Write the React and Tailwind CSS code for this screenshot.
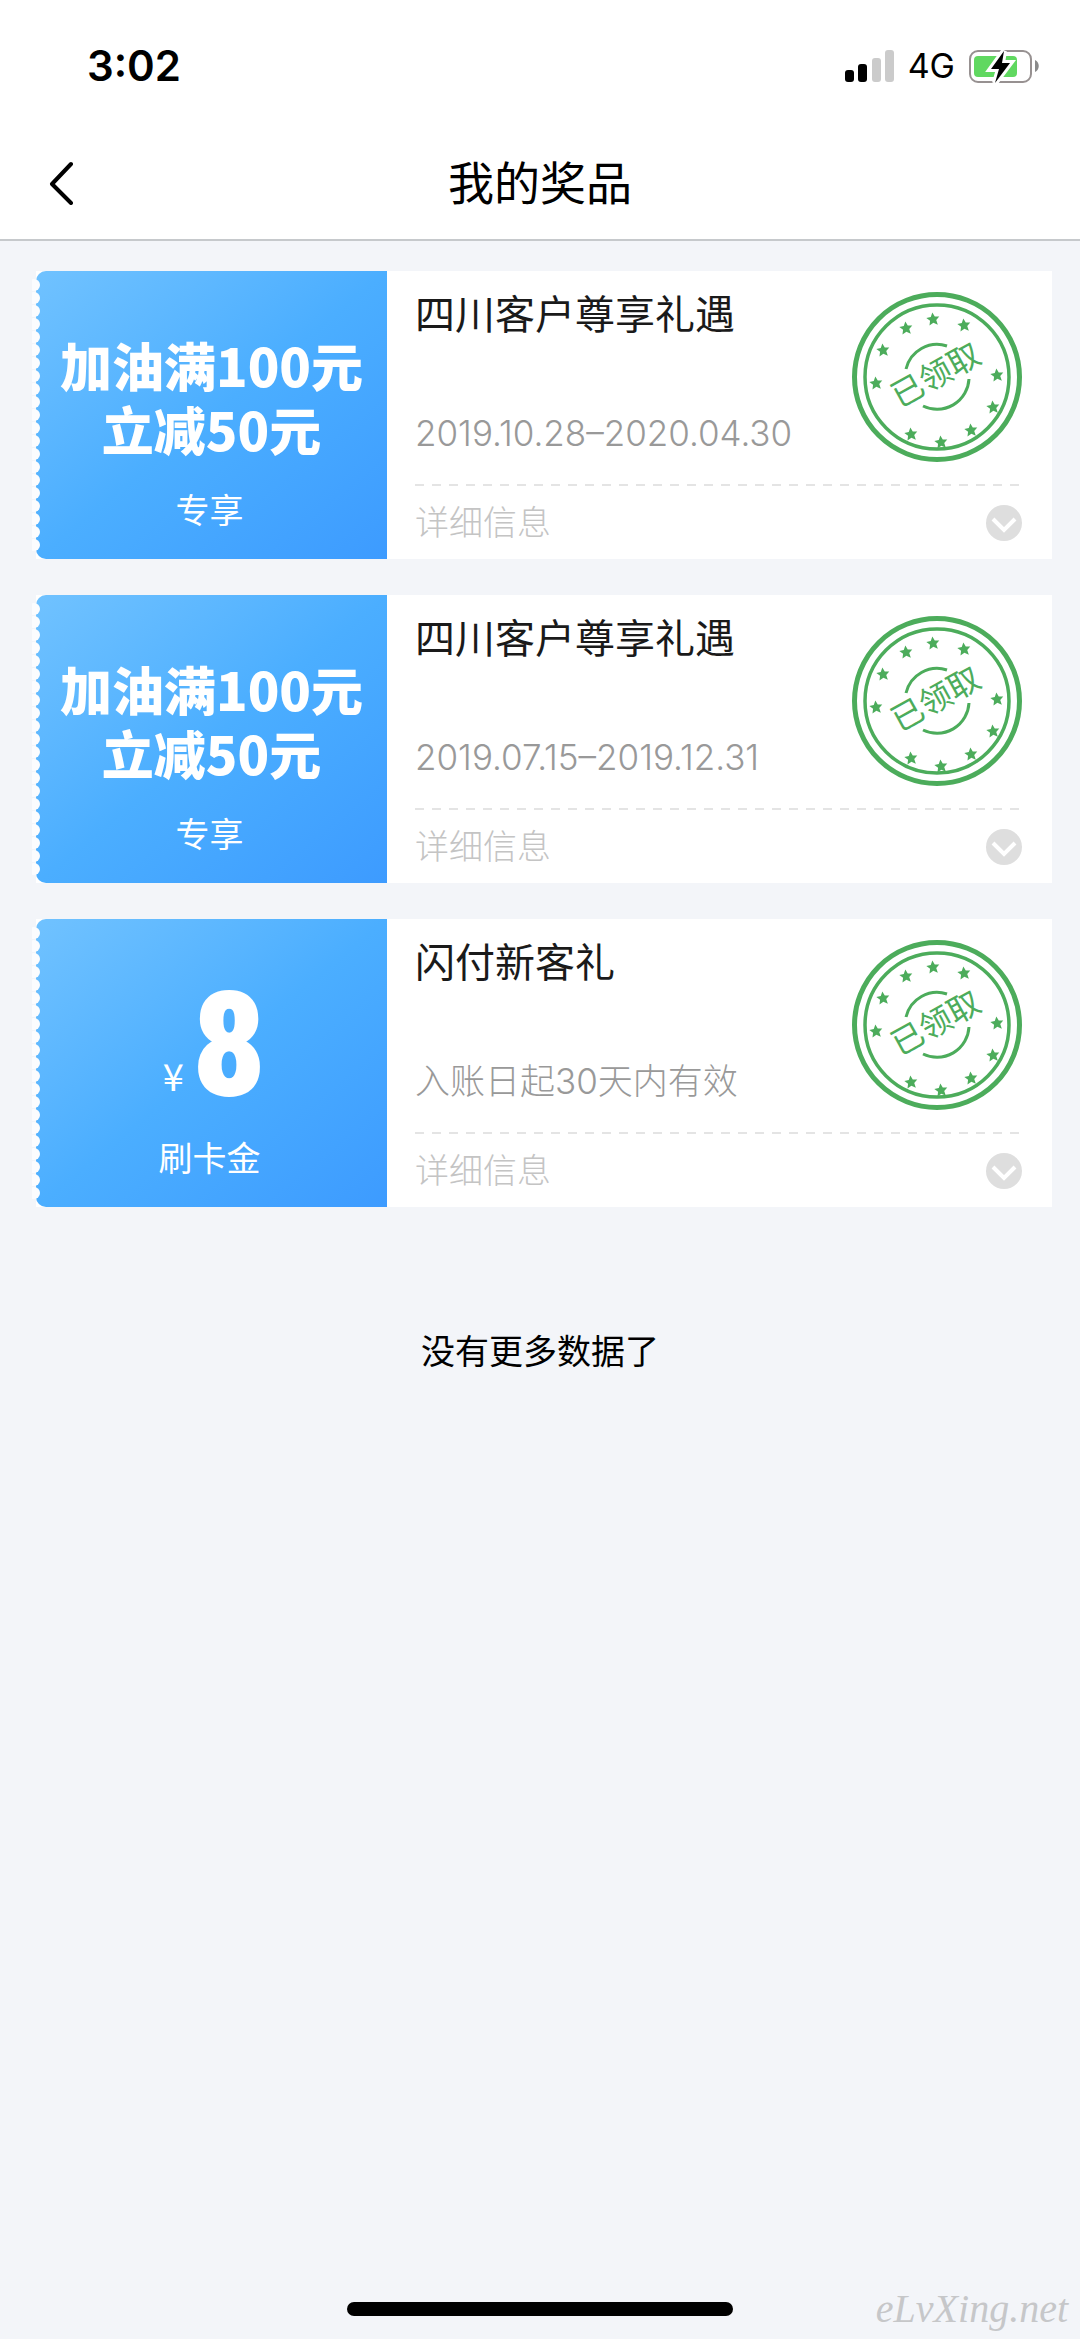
import React from 'react';

const REWARDS = [
  {
    id: 1,
    title: '四川客户尊享礼遇',
    period: '2019.10.28–2020.04.30',
    headline: ['加油满100元', '立减50元'],
    caption: '专享',
  },
  {
    id: 2,
    title: '四川客户尊享礼遇',
    period: '2019.07.15–2019.12.31',
    headline: ['加油满100元', '立减50元'],
    caption: '专享',
  },
  {
    id: 3,
    title: '闪付新客礼',
    period: '入账日起30天内有效',
    amount: '8',
    caption: '刷卡金',
  },
];

// star centres around the stamp ring
const STARS = [
  [81, 27], [112, 33], [54, 36], [31, 58], [24, 91], [145, 83],
  [141, 115], [119, 138], [89, 150], [59, 142],
];

const StatusBar = () => (
  <div className="flex h-[132px] items-center justify-between pl-[87px] pr-[41px]">
    <span className="font-['Inter'] text-[42px] font-semibold leading-none">3:02</span>
    <div className="flex items-center gap-[14px]">
      <svg width="49" height="32" viewBox="0 0 49 32" aria-hidden="true">
        <rect x="0" y="20" width="9" height="12" rx="3" fill="#000" />
        <rect x="13" y="14" width="9" height="18" rx="3" fill="#000" />
        <rect x="27" y="8" width="9" height="24" rx="3" fill="#cbcbcb" />
        <rect x="40" y="0" width="9" height="32" rx="3" fill="#cbcbcb" />
      </svg>
      <span className="font-['Inter'] text-[34px] leading-none">4G</span>
      <svg width="70" height="36" viewBox="0 0 70 36" aria-hidden="true">
        <rect x="1" y="3" width="61" height="31" rx="8" fill="#fff" stroke="#979191" strokeWidth="2" />
        <rect x="5" y="8" width="43" height="21" rx="4" fill="#60d860" />
        <path d="M66 12c5 2 5 10 0 12z" fill="#8a8a8a" />
        <path d="M35 3 22 21h8l-4 14 15-20h-8z" fill="#000" stroke="#fff" strokeWidth="6" paintOrder="stroke" />
      </svg>
    </div>
  </div>
);

const NavBar = () => (
  <header className="grid h-[107px] grid-cols-[1fr_auto_1fr] items-center px-[48px] pb-[8px]">
    <button type="button" aria-label="返回" className="justify-self-start">
      <svg width="26" height="46" viewBox="0 0 26 46" fill="none" stroke="#000" strokeWidth="4" strokeLinecap="round" strokeLinejoin="round">
        <path d="M23 5 4 25l19 19" />
      </svg>
    </button>
    <h1 className="pb-[4px] text-[46px] leading-none">我的奖品</h1>
  </header>
);

const Stamp = () => (
  <svg width="170" height="170" viewBox="0 0 170 170" className="shrink-0">
    <g fill="none" stroke="#4cac5b">
      <circle cx="85" cy="85" r="82.5" strokeWidth="5" />
      <circle cx="85" cy="85" r="72" strokeWidth="3.5" />
      <path d="M54 77A32 32 0 0 1 95 54M71 114A32 32 0 0 0 117 87" strokeWidth="3" />
    </g>
    {STARS.map(([x, y]) => (
      <path
        key={`${x}-${y}`}
        transform={`translate(${x} ${y}) rotate(-6)`}
        fill="#4cac5b"
        d="M0-6.5 2-2.2 6.5-1.8 3.1 1.4 4.2 6.2 0 3.8-4.2 6.2-3.1 1.4-6.5-1.8-2-2.2z"
      />
    ))}
    <text x="85" y="94" textAnchor="middle" fontSize="32" fill="#4cac5b" transform="rotate(-29 85 85)">
      已领取
    </text>
  </svg>
);

const TicketEdge = () => (
  <svg width="12" height="288" className="absolute -left-[4px] top-0" aria-hidden="true">
    {Array.from({ length: 21 }, (_, i) => (
      <circle key={i} cx="2" cy={14 + i * 13} r="6" fill="#fbfcfe" />
    ))}
  </svg>
);

const RewardFace = ({ reward }) => {
  if (reward.amount) {
    return (
      <div className="flex h-[214px] items-end gap-[8px] pb-[16px] pl-[6px]">
        <span className="text-[38px] leading-[84px]">¥</span>
        <span className="font-['Roboto_Condensed','Open_Sans_Condensed','Liberation_Sans'] text-[146px] font-black leading-[140px]">
          {reward.amount}
        </span>
      </div>
    );
  }
  return (
    <div className="h-[214px] pt-[62px] text-center">
      {reward.headline.map((line) => (
        <p key={line} className="text-[52px] font-black leading-[64px]">{line}</p>
      ))}
    </div>
  );
};

const RewardCard = ({ reward }) => (
  <li className="flex bg-white">
    <div className="relative flex h-[288px] w-[351px] shrink-0 flex-col items-center rounded-l-[10px] bg-linear-to-br from-[#70c2ff] via-[#4baeff] to-[#3d9bff] text-white">
      <TicketEdge />
      <RewardFace reward={reward} />
      <p className="pr-[4px] text-[34px] leading-[48px]">{reward.caption}</p>
    </div>
    <div className="flex flex-1 flex-col pl-[28px] pr-[30px]">
      <div className="flex h-[213px] justify-between">
        <div className="flex flex-col pt-[17px]">
          <h2 className="text-[40px] leading-[48px] text-[#1a1a1a]">{reward.title}</h2>
          <p className="mt-[73px] font-['Inter','Noto_Sans_CJK_SC',sans-serif] text-[35px] font-light leading-[48px] text-[#999]">{reward.period}</p>
        </div>
        <div className="pt-[21px]">
          <Stamp />
        </div>
      </div>
      <svg width="100%" height="3" aria-hidden="true">
        <line x1="0" y1="1" x2="100%" y2="1" stroke="#e4e4e4" strokeWidth="2" strokeDasharray="9 8" />
      </svg>
      <button type="button" className="flex flex-1 items-center justify-between text-[34px] font-light text-[#c4c4c4]">
        <span className="pb-[6px]">详细信息</span>
        <svg width="36" height="38" viewBox="0 0 36 38" aria-hidden="true">
          <circle cx="18" cy="19" r="18" fill="#dedede" />
          <path d="m7 15 11 11 11-11" fill="none" stroke="#fff" strokeWidth="4" />
        </svg>
      </button>
    </div>
  </li>
);

const App = () => (
  <div className="flex min-h-screen flex-col bg-[#f3f5f9] font-['Noto_Sans_CJK_SC',sans-serif] text-black">
    <div className="border-b-2 border-[#c6c9cc] bg-white">
      <StatusBar />
      <NavBar />
    </div>
    <main className="flex-1 pt-[30px]">
      <ul className="flex flex-col gap-[36px] pl-[36px] pr-[28px]">
        {REWARDS.map((reward) => (
          <RewardCard key={reward.id} reward={reward} />
        ))}
      </ul>
      <p className="mt-[119px] text-center text-[34px] leading-[48px]">没有更多数据了</p>
    </main>
    <footer className="grid grid-cols-[1fr_386px_1fr] items-center">
      <div className="col-start-2 h-[14px] rounded-full bg-black" />
      <span className="justify-self-end pr-[12px] font-['Liberation_Serif'] text-[40px] italic text-[#c6c7c9]">eLvXing.net</span>
    </footer>
  </div>
);

export default App;
